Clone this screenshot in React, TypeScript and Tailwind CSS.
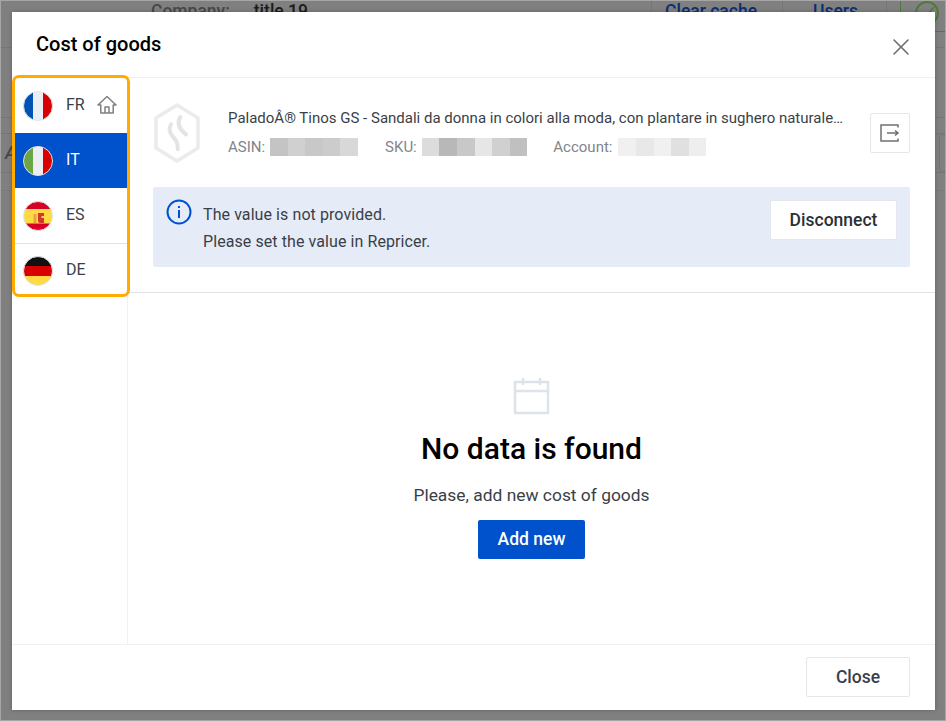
import { X } from 'lucide-react'

const pixels = {
  asin: ['#c4c4c4', '#d0d0d0', '#c8c8c8', '#cccccc', '#d8d8d8'],
  sku: ['#dcdcdc', '#b8b8b8', '#c8c8c8', '#e6e6e6', '#d0d0d0', '#c0c0c0'],
  account: ['#f0f0f0', '#e8e8e8', '#f0f0f0', '#e0e0e0', '#eeeeee'],
}

function Blur({ colors }: { colors: string[] }) {
  return (
    <span className="flex h-[18px]">
      {colors.map((c, i) => (
        <span key={i} className="w-[17.6px] h-full" style={{ backgroundColor: c }} />
      ))}
    </span>
  )
}

function Flag({ code }: { code: string }) {
  return (
    <svg width="30" height="30" viewBox="0 0 30 30" className="shrink-0">
      <defs>
        <clipPath id={`clip-${code}`}>
          <circle cx="15" cy="15" r="14.5" />
        </clipPath>
      </defs>
      <g clipPath={`url(#clip-${code})`}>
        {code === 'FR' && (
          <>
            <rect width="10" height="30" fill="#0052b4" />
            <rect x="10" width="10" height="30" fill="#eceef4" />
            <rect x="20" width="10" height="30" fill="#d80000" />
          </>
        )}
        {code === 'IT' && (
          <>
            <rect width="10" height="30" fill="#6da544" />
            <rect x="10" width="10" height="30" fill="#eceef4" />
            <rect x="20" width="10" height="30" fill="#d80000" />
          </>
        )}
        {code === 'ES' && (
          <>
            <rect width="30" height="30" fill="#ffda44" />
            <rect width="30" height="8" fill="#d80027" />
            <rect y="22.500" width="30" height="8" fill="#d80027" />
            <rect x="10.500" y="13" width="3" height="9" fill="#e8a33d" />
            <path d="M15 12h6v3h-2.500v2H21v5h-5l-1-2z" fill="#d8342f" />
          </>
        )}
        {code === 'DE' && (
          <>
            <rect width="30" height="10" fill="#111111" />
            <rect y="10" width="30" height="10" fill="#d80000" />
            <rect y="20" width="30" height="10" fill="#ffda44" />
          </>
        )}
      </g>
      <circle cx="15" cy="15" r="14.5" fill="none" stroke="#dfe3e8" strokeWidth="1" />
    </svg>
  )
}

function HomeIcon() {
  return (
    <svg width="20" height="20" viewBox="0 0 20 20" fill="none" stroke="#808080" strokeWidth="1.5" strokeLinejoin="round">
      <path d="M1 10 10 1.5 19 10h-2.8v8H3.8v-8z" />
      <path d="M8 18v-6h4v6" />
    </svg>
  )
}

function Market({ code, active, home, last }: { code: string; active?: boolean; home?: boolean; last?: boolean }) {
  return (
    <div
      className={`flex items-center pl-[11px] pr-[10px] text-[16px] ${
        active ? 'bg-[#0052cc] text-white' : 'text-[#3a3f47]'
      } ${last ? 'h-[55px] border-t border-[#dfe3e8]' : 'h-[55px]'}`}
    >
      <Flag code={code} />
      <span className="ml-[13px] -mt-[2px]">{code}</span>
      {home && (
        <span className="ml-auto -mt-[2px]">
          <HomeIcon />
        </span>
      )}
    </div>
  )
}

// what the page behind the dialog shows through the dim layer
function Backdrop() {
  return (
    <div className="text-[17.500px] leading-[20px] font-medium">
      <div className="h-[48px] flex items-start pl-[151px] border-b border-[#757575]">
        <span className="mt-[1px] text-[#484848]">Company:</span>
        <span className="mt-[1px] ml-[24px] text-[#1c1c1c]">title 19</span>
        <div className="ml-auto h-[32px] flex items-start">
          <div className="w-[117px] h-[32px] border-l border-[#757575] pl-[13px] pt-[1px] text-[#0a2f73]">Clear cache</div>
          <div className="w-[105px] h-[32px] ml-[14px] border-x border-[#757575] pl-[30px] pt-[1px] text-[#0a2f73]">Users</div>
          <div className="w-[46px] h-[32px] ml-[13px] border-l border-b border-[#4d7a3a] pl-[14px] pt-[1px]">
            <svg width="24" height="24" viewBox="0 0 24 24" fill="none" stroke="#4d7a3a">
              <circle cx="12" cy="12" r="11" strokeWidth="2" />
              <path d="M19 6l-6 7" strokeWidth="1.5" />
            </svg>
          </div>
        </div>
      </div>
      <div className="h-[70px] border-b border-[#757575]" />
      <div className="h-[16px] border-b border-[#757575]" />
      <div className="h-[39px] border-b border-[#757575] flex items-center justify-between pl-[5px]">
        <span className="italic text-[#484848]">A</span>
        <span className="w-[20px] h-[38px] -mr-[13px] border border-[#757575] rounded-[3px]" />
      </div>
      <div className="h-[18px] border-b border-[#7a7a7a]" />
    </div>
  )
}

export default function App() {
  return (
    <div className="relative w-[946px] h-[721px] overflow-hidden bg-[#808080] font-['Roboto',sans-serif]">
      <Backdrop />
      <div className="absolute inset-0 border border-[#a6a6a6] pointer-events-none" />

      <div className="absolute left-[12px] top-[12px] w-[923px] h-[698px] bg-white flex flex-col shadow-[0_0_4px_rgba(0,0,0,0.25)]">
        <header className="h-[66px] shrink-0 flex items-center justify-between pl-[24px] pr-[20px] border-b border-[#eef0f3]">
          <h1 className="text-[20px] font-medium text-black -mt-[2px]">Cost of goods</h1>
          <X size={28} strokeWidth={1.4} className="text-[#707070] mt-[5px]" />
        </header>

        <div className="flex flex-1 min-h-0">
          <aside className="w-[116px] shrink-0 border-r border-[#f0f1f3]">
            <Market code="FR" home />
            <Market code="IT" active />
            <Market code="ES" />
            <Market code="DE" last />
          </aside>

          <main className="flex-1 flex flex-col min-w-0">
            <section className="h-[215px] shrink-0 border-b border-[#dfe3e8] pl-[25px] pr-[25px]">
              <div className="h-[109px] flex items-center">
                <svg width="48" height="60" viewBox="0 0 48 60" fill="none" className="shrink-0">
                  <path d="M24 2 45 15v30L24 58 3 45V15z" stroke="#ebebeb" strokeWidth="3.500" strokeLinejoin="round" />
                  <path d="M27.300 14Q22 23 33 31.300" stroke="#e4e4e4" strokeWidth="4" strokeLinecap="round" />
                  <path d="M18 21.300Q14 28 21 35Q25 39 24.700 46.300" stroke="#e4e4e4" strokeWidth="4" strokeLinecap="round" />
                </svg>
                <div className="ml-[27px] w-[616px]">
                  <div className="text-[15px] leading-[20px] text-[#3a3f47] truncate">
                    PaladoÂ® Tinos GS - Sandali da donna in colori alla moda, con plantare in sughero naturale...
                  </div>
                  <div className="mt-[9px] flex items-center text-[15px] leading-[20px] text-[#80858c]">
                    <span>ASIN:</span>
                    <span className="ml-[5px]"><Blur colors={pixels.asin} /></span>
                    <span className="ml-[27px]">SKU:</span>
                    <span className="ml-[5px]"><Blur colors={pixels.sku} /></span>
                    <span className="ml-[26px]">Account:</span>
                    <span className="ml-[6px]"><Blur colors={pixels.account} /></span>
                  </div>
                </div>
                <button className="ml-auto w-[40px] h-[40px] border border-[#e3e6ea] rounded-[2px] bg-white flex items-center justify-center">
                  <svg width="20" height="18" viewBox="0 0 20 18" fill="none" stroke="#707070" strokeWidth="1.5">
                    <path d="M18 3.5V1H1v16h17v-2.500" />
                    <path d="M7 9h11M15 6.500 18 9l-3 2.500" />
                  </svg>
                </button>
              </div>
              <div className="h-[80px] bg-[#e5ecf8] rounded-[2px] flex items-start pt-[13px] pl-[13px] pr-[13px]">
                <svg width="26" height="26" viewBox="0 0 26 26" fill="none" className="shrink-0 -mt-[1px]">
                  <circle cx="13" cy="13" r="11.500" stroke="#0052cc" strokeWidth="2" />
                  <rect x="12" y="11" width="2" height="8" fill="#0052cc" />
                  <rect x="12" y="7" width="2" height="2" fill="#0052cc" />
                </svg>
                <div className="ml-[11px] mt-[1px] text-[16px] leading-[27px] text-[#3a3f47] tracking-[0.005em]">
                  <div>The value is not provided.</div>
                  <div>Please set the value in Repricer.</div>
                </div>
                <button className="ml-auto w-[127px] h-[40px] bg-white rounded-[2px] border border-[#e3e6ea] text-[17.500px] font-medium text-[#2b2f36]">
                  Disconnect
                </button>
              </div>
            </section>

            <section className="flex-1 flex flex-col items-center pt-[85px]">
              <svg width="38" height="38" viewBox="0 0 38 38" fill="none" stroke="#dde3e9" strokeWidth="2.500">
                <rect x="2" y="4" width="33" height="31" />
                <path d="M2 13h33M10 0v7M27 0v7" />
              </svg>
              <h2 className="mt-[14px] text-[30px] leading-[38px] font-medium text-black">No data is found</h2>
              <p className="mt-[15px] text-[17.400px] leading-[24px] text-[#3a3f47]">Please, add new cost of goods</p>
              <button className="mt-[13px] w-[107px] h-[39px] bg-[#0052cc] rounded-[2px] text-white text-[17.500px] font-medium">
                Add new
              </button>
            </section>
          </main>
        </div>

        <footer className="h-[66px] shrink-0 border-t border-[#f0f1f3] flex items-start justify-end pt-[12px] pr-[25px]">
          <button className="w-[104px] h-[40px] bg-white border border-[#e3e6ea] rounded-[2px] text-[17.500px] font-medium text-[#3a3f47]">
            Close
          </button>
        </footer>
      </div>

      {/* orange highlight drawn over the marketplace list */}
      <div className="absolute left-[12px] top-[75px] w-[118px] h-[222px] border-[3px] border-[#ffab00] rounded-[7px] pointer-events-none" />
    </div>
  )
}
